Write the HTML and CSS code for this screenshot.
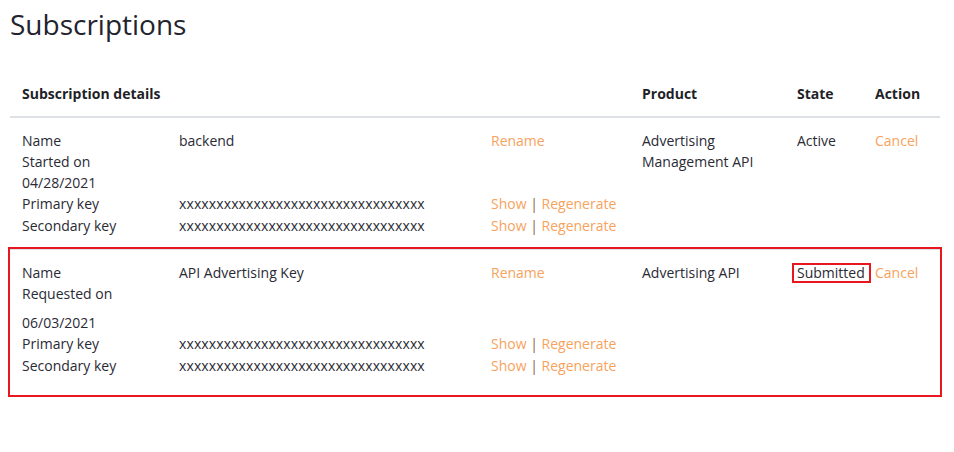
FILE: index.html
```html
<!DOCTYPE html>
<html lang="en">
<head>
<meta charset="utf-8">
<title>Subscriptions</title>
<link rel="stylesheet" href="styles.css">
</head>
<body>
<div class="page">
  <h1 class="title">Subscriptions</h1>
  <div class="table">
    <div class="row head">
      <div class="cell span3">Subscription details</div>
      <div class="cell">Product</div>
      <div class="cell">State</div>
      <div class="cell">Action</div>
    </div>

    <div class="row body">
      <div class="details">
        <div class="cell">Name</div><div class="cell">backend</div><div class="cell"><a class="link">Rename</a></div>
        <div class="cell">Started on</div><div class="cell"></div><div class="cell"></div>
        <div class="cell">04/28/2021</div><div class="cell"></div><div class="cell"></div>
        <div class="cell">Primary key</div><div class="cell key">xxxxxxxxxxxxxxxxxxxxxxxxxxxxxxxxx</div><div class="cell"><a class="link">Show</a> <span class="sep">|</span> <a class="link">Regenerate</a></div>
        <div class="cell last">Secondary key</div><div class="cell key last">xxxxxxxxxxxxxxxxxxxxxxxxxxxxxxxxx</div><div class="cell last"><a class="link">Show</a> <span class="sep">|</span> <a class="link">Regenerate</a></div>
      </div>
      <div class="cell">Advertising Management API</div>
      <div class="cell">Active</div>
      <div class="cell"><a class="link">Cancel</a></div>
    </div>

    <div class="highlight">
      <div class="row body bordered">
        <div class="details">
          <div class="cell">Name</div><div class="cell">API Advertising Key</div><div class="cell"><a class="link">Rename</a></div>
          <div class="cell">Requested on</div><div class="cell"></div><div class="cell"></div>
          <div class="cell late">06/03/2021</div><div class="cell late"></div><div class="cell late"></div>
          <div class="cell">Primary key</div><div class="cell key">xxxxxxxxxxxxxxxxxxxxxxxxxxxxxxxxx</div><div class="cell"><a class="link">Show</a> <span class="sep">|</span> <a class="link">Regenerate</a></div>
          <div class="cell last">Secondary key</div><div class="cell key last">xxxxxxxxxxxxxxxxxxxxxxxxxxxxxxxxx</div><div class="cell last"><a class="link">Show</a> <span class="sep">|</span> <a class="link">Regenerate</a></div>
        </div>
        <div class="cell">Advertising API</div>
        <div class="cell"><span class="marked">Submitted</span></div>
        <div class="cell"><a class="link">Cancel</a></div>
      </div>
    </div>
  </div>
</div>
</body>
</html>
```

FILE: styles.css
```css
html, body {
  margin: 0;
  padding: 0;
  background: #ffffff;
}
body {
  font-family: "Open Sans", "Liberation Sans", sans-serif;
  font-size: 14px;
  line-height: 21px;
  color: #2a2a35;
}
.page {
  padding: 5px 14px 0 10px;
}
.title {
  margin: 0;
  font-size: 28px;
  line-height: 38px;
  font-weight: 400;
  color: #23232d;
}
.table {
  width: 930px;
  margin-top: 29px;
}
.row {
  display: grid;
  grid-template-columns: 157px 312px 151px 155px 78px 77px;
  align-items: start;
}
.cell {
  padding: 0 12px;
  min-height: 21px;
}
.span3 {
  grid-column: 1 / span 3;
}
.head {
  font-weight: 700;
  color: #1f1f28;
  padding: 11px 0 12px;
  border-bottom: 2px solid #dee2e6;
}
.body {
  padding: 12px 0 11px;
}
.details {
  grid-column: 1 / span 3;
  display: grid;
  grid-template-columns: 157px 312px 151px;
}
.key {
  letter-spacing: 0.12px;
}
.last {
  padding-top: 1px;
}
.late {
  padding-top: 8px;
}
.link {
  color: #f7a25d;
  text-decoration: none;
  cursor: pointer;
}
.sep {
  color: #8a5f4c;
}
.highlight {
  margin: 0 -2px;
  border: 2px solid #e8161f;
}
.bordered {
  border-top: 1px solid #dee2e6;
  padding: 12px 0 19px;
}
.marked {
  display: inline-block;
  line-height: 16px;
  border: 2px solid #e8161f;
  padding: 0 4px 0 3px;
  margin-left: -5px;
}
```
